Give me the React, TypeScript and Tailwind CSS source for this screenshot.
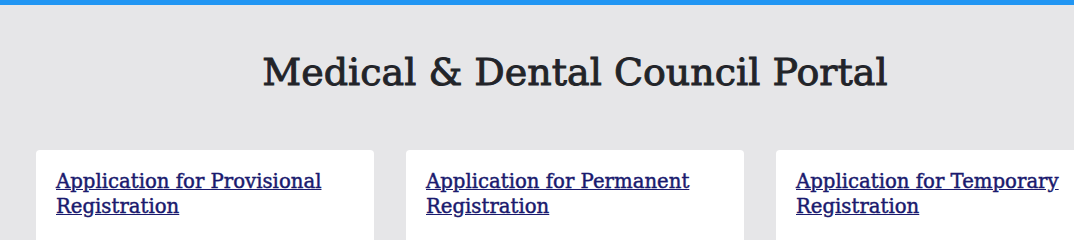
export default function App() {
  const cards = [
    'Application for Provisional Registration',
    'Application for Permanent Registration',
    'Application for Temporary Registration',
  ];

  return (
    <div className="min-h-[233px] bg-[#e6e6e8] overflow-hidden" style={{ fontFamily: '"DejaVu Serif", "Liberation Serif", serif' }}>
      <div className="h-[5px] bg-[#2196f3]" />
      <div className="w-[1150px] px-[36px]">
        <h1 className="pt-[37px] pb-[48px] text-center text-[38px] leading-[60px] text-[#222429] [-webkit-text-stroke:0.9px]">
          Medical &amp; Dental Council Portal
        </h1>
        <div className="grid grid-cols-3 gap-8">
          {cards.map((title) => (
            <div key={title} className="rounded-[4px] bg-white px-5 pt-[20px] pb-6 min-h-[120px]">
              <a href="#" className="text-[19.7px] leading-[24px] text-[#1a1a6e] underline [-webkit-text-stroke:0.45px]">
                {title}
              </a>
            </div>
          ))}
        </div>
      </div>
    </div>
  );
}
